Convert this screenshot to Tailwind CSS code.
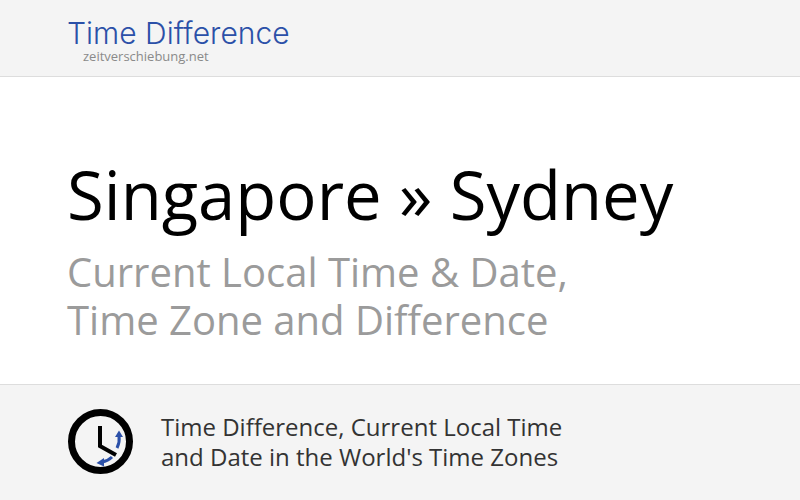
<!DOCTYPE html>
<html lang="en">
  <head>
    <meta charset="UTF-8" />
    <title>Singapore » Sydney</title>
    <script src="https://cdn.jsdelivr.net/npm/@tailwindcss/browser@4"></script>
  </head>
  <body class="bg-white font-['Open_Sans',sans-serif] overflow-hidden">
    <div class="w-[800px] h-[500px] flex flex-col">
      <!-- Logo -->
      <header class="h-[77px] bg-[#f4f4f4] border-b border-[#dddddd] pl-[67px] pt-[15px]">
        <div class="font-['Inter',sans-serif] font-light text-[30px] leading-[36px] tracking-[0px] text-[#2b50a8]">Time Difference</div>
        <div class="pl-[16px] -mt-[3px] text-[13px] leading-[16px] text-[#8a8a8a]">zeitverschiebung.net</div>
      </header>
      <!-- Title -->
      <main class="h-[307px] pl-[67px] pt-[78px]">
        <h1 class="text-[67px] leading-[78px] text-black">Singapore » Sydney</h1>
        <p class="mt-[15px] text-[40px] leading-[48px] text-[#9b9b9b]">Current Local Time &amp; Date,<br />Time Zone and Difference</p>
      </main>
      <!-- Footer -->
      <footer class="flex-1 bg-[#f4f4f4] border-t border-[#dddddd] pl-[68px] flex items-center gap-[27px]">
        <svg class="w-[66px] h-[66px] -mt-[2px]" viewBox="0 0 66 66" fill="none">
          <circle cx="32.500" cy="32.500" r="29" stroke="#000" stroke-width="7" />
          <path d="M32 17V37L48 46" stroke="#000" stroke-width="4" />
          <path d="M49 39Q52 33 51 27" stroke="#2b50a8" stroke-width="3" />
          <path d="M47 28L51 21.500L55 28Z" fill="#2b50a8" />
          <path d="M44 48Q40 52 34 53" stroke="#2b50a8" stroke-width="3" />
          <path d="M36 49L28.500 54L36 57.500Z" fill="#2b50a8" />
        </svg>
        <p class="-mt-[2px] text-[24px] leading-[30px] text-[#333333]">Time Difference, Current Local Time<br />and Date in the World's Time Zones</p>
      </footer>
    </div>
  </body>
</html>
